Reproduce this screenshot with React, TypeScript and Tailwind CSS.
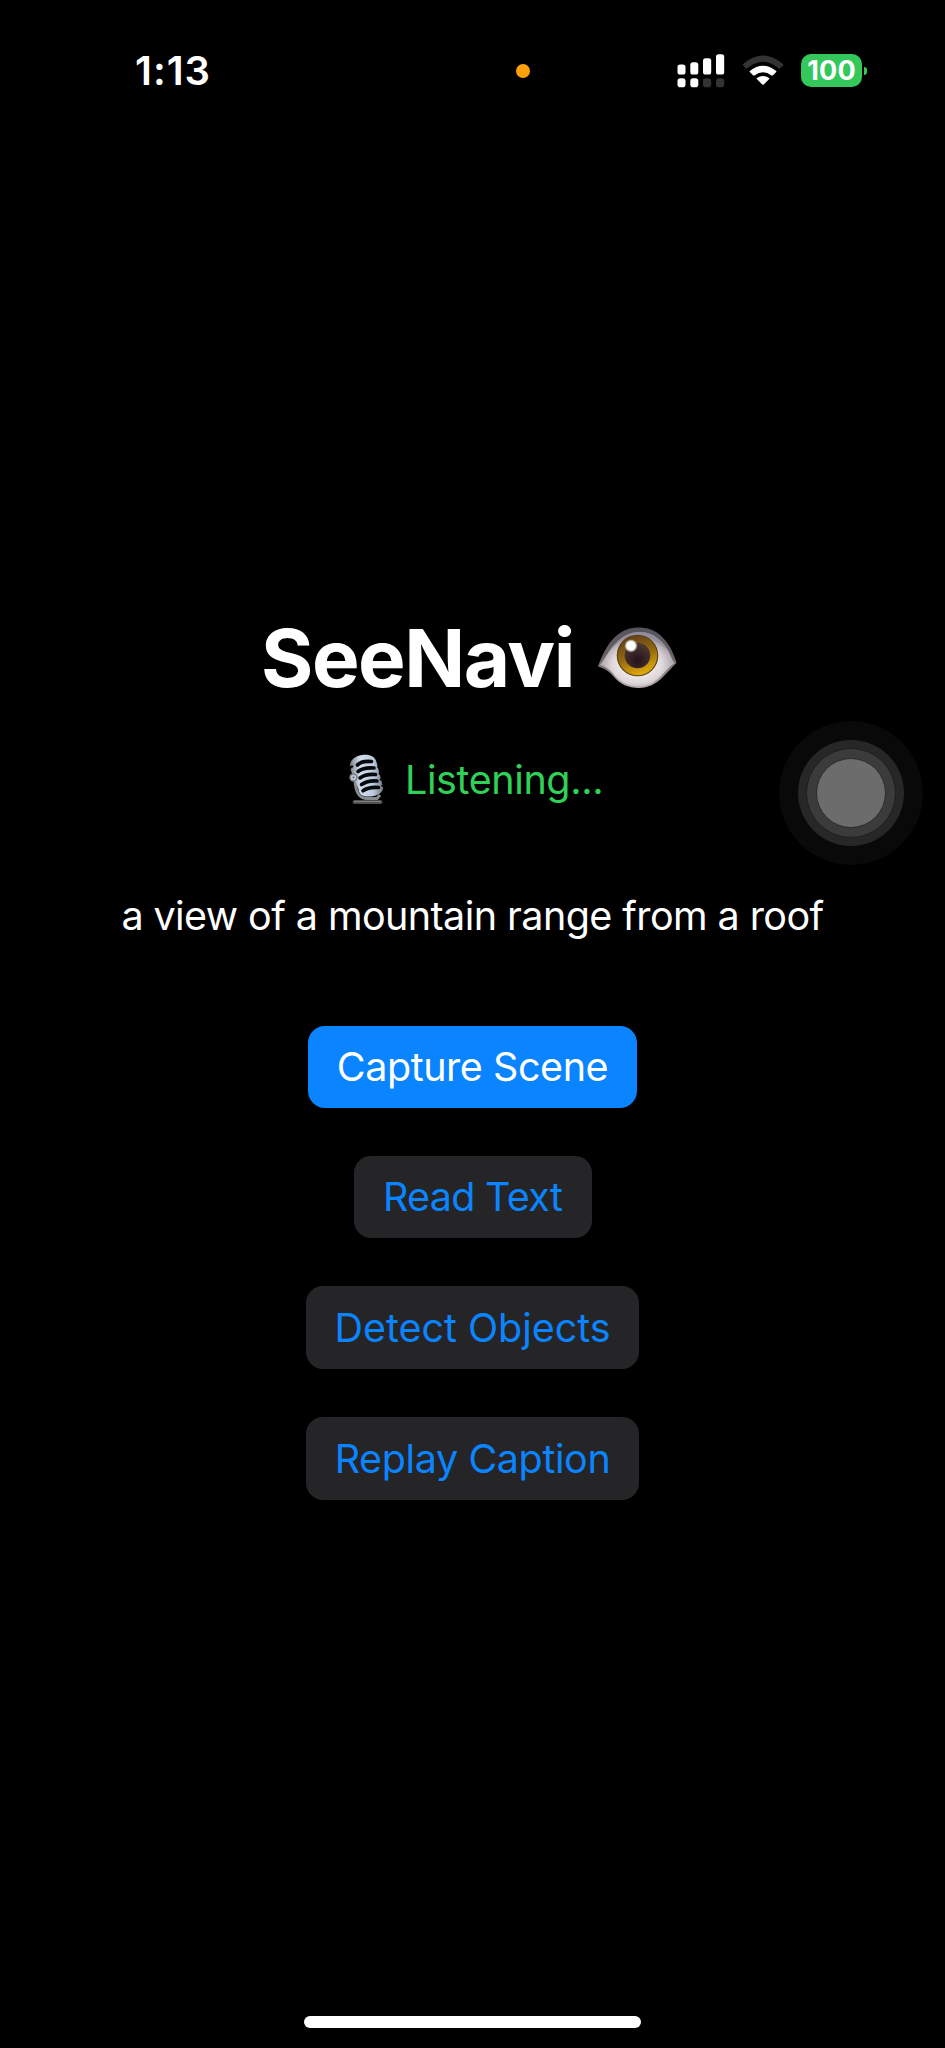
function SignalIcon() {
  return (
    <svg className="block h-[34px] w-[48px]" viewBox="0 0 48 34">
      <g fill="#fff">
        <rect x="0.5" y="10.5" width="8" height="10" rx="2.6" />
        <rect x="13.3" y="8.2" width="8" height="12.3" rx="2.6" />
        <rect x="26" y="4.2" width="8.2" height="16.3" rx="2.6" />
        <rect x="39" y="0.2" width="8.2" height="20.3" rx="2.6" />
        <rect x="0.5" y="24.2" width="8" height="9" rx="2.8" />
        <rect x="13.3" y="24.2" width="8" height="9" rx="2.8" />
      </g>
      <g fill="#333335">
        <rect x="26" y="24.2" width="8.2" height="9" rx="2.8" />
        <rect x="39" y="24.2" width="8.2" height="9" rx="2.8" />
      </g>
    </svg>
  );
}

function WifiIcon() {
  return (
    <svg className="block h-[34px] w-[42px]" viewBox="0 0 42 34">
      <path
        d="M0.8 10.2 Q21 -7.2 41.2 10.2 Q41.6 10.7 41.2 11.2 L37.9 14.4 Q37.4 14.8 36.9 14.4 Q21 1.2 5.1 14.4 Q4.6 14.8 4.1 14.4 L0.8 11.2 Q0.4 10.7 0.8 10.2Z"
        fill="#333335"
      />
      <path
        d="M7.8 17 Q21 6.6 34.2 17 Q34.7 17.6 34.2 18.1 L30.7 21.4 Q30.1 21.8 29.5 21.4 Q21 14.9 12.5 21.4 Q11.9 21.8 11.3 21.4 L7.8 18.1 Q7.3 17.6 7.8 17Z"
        fill="#fff"
      />
      <path
        d="M14.9 24 Q21 19.9 27.1 24 Q27.7 24.6 27.2 25.1 L21.7 30.5 Q21 31.2 20.3 30.5 L14.8 25.1 Q14.3 24.6 14.9 24Z"
        fill="#fff"
      />
    </svg>
  );
}

function Battery() {
  return (
    <div className="flex items-center gap-[2px]">
      <div className="flex h-[33px] w-[61px] items-center justify-center rounded-[10px] bg-[#34c759] text-[27px] leading-none font-bold tracking-[0.2px]">
        100
      </div>
      <div className="h-[8px] w-[3px] rounded-r-full bg-[#34c759]" />
    </div>
  );
}

function EyeIcon() {
  return (
    <svg className="block h-[62px] w-[80px]" viewBox="0 0 80 62">
      <defs>
        <linearGradient id="lid" x1="0" y1="0" x2="0" y2="1">
          <stop offset="0" stopColor="#55535a" />
          <stop offset="0.55" stopColor="#6f6468" />
          <stop offset="1" stopColor="#b5a8ac" />
        </linearGradient>
        <radialGradient id="sclera" cx="0.5" cy="0.6" r="0.55">
          <stop offset="0" stopColor="#fff" />
          <stop offset="0.6" stopColor="#e0d9dc" />
          <stop offset="1" stopColor="#978f9a" />
        </radialGradient>
        <linearGradient id="iris" x1="0.3" y1="0" x2="0.65" y2="1">
          <stop offset="0" stopColor="#5f4019" />
          <stop offset="0.5" stopColor="#94690f" />
          <stop offset="1" stopColor="#e5b00c" />
        </linearGradient>
        <radialGradient id="pupil" cx="0.5" cy="0.7" r="0.7">
          <stop offset="0" stopColor="#24121a" />
          <stop offset="1" stopColor="#513a35" />
        </radialGradient>
        <radialGradient id="glint">
          <stop offset="0.65" stopColor="#fff" />
          <stop offset="1" stopColor="#fff" stopOpacity="0.2" />
        </radialGradient>
      </defs>
      <path
        d="M1 39.5 C4 31 10 17 18 10 C27 1.5 37 0 46 0.8 C60 2 69 12 75 24 C77 29 79 33 79.5 36 C75 40 71 45 66 50 C59 57 51 61 42 61 C31 61 23 57 17 50 C12 44 7 41 1 39.5Z"
        fill="url(#lid)"
      />
      <path
        d="M2.5 38 C7 34 12 22 21 14 C29 6.5 37 4.5 45 5 C57 6 66 14 72 25 C74 30 76 34 78 36 C73 39 69 44 64 49 C57 56 51 59.5 42 59.5 C32 59.5 24 56 18 49 C13 42 8 39.5 2.5 38Z"
        fill="url(#sclera)"
      />
      <path d="M12 25 C25 5 37 5 45 5 C56 6 63 12 71 24 C59 12 49 9.5 40 9.5 C30 9.5 21 14 12 25Z" fill="#8d8c9c" opacity="0.75" />
      <circle cx="40.5" cy="28.5" r="20.8" fill="#5e4013" />
      <circle cx="40.5" cy="28.5" r="19.7" fill="url(#iris)" />
      <circle cx="40.5" cy="28.5" r="12.8" fill="url(#pupil)" />
      <circle cx="34" cy="18.8" r="6.4" fill="url(#glint)" />
    </svg>
  );
}

function MicIcon() {
  return (
    <svg className="block h-[52px] w-[36px]" viewBox="0 0 36 52">
      <defs>
        <linearGradient id="metal" x1="0" y1="0" x2="1" y2="0">
          <stop offset="0" stopColor="#77818a" />
          <stop offset="0.3" stopColor="#d3dfea" />
          <stop offset="0.7" stopColor="#bccade" />
          <stop offset="1" stopColor="#737a84" />
        </linearGradient>
      </defs>
      <rect x="3.5" y="46.3" width="30" height="3.6" rx="1.8" fill="#505050" />
      <path d="M5 47.3 H32" stroke="#8e8e8e" strokeWidth="1" />
      <path d="M6 27 C7 37 9 43 17 44.5 H28 L31 41" fill="none" stroke="#868b90" strokeWidth="3" />
      <path
        d="M1 12 C1 6 6 2 13 1 C20 0 26 2 27.5 8 L34 33 C34.5 38 29 42 21 42.5 C14 43 10.5 41 9.5 35 L2 17Z"
        fill="url(#metal)"
      />
      <g fill="none" stroke="#05090d" strokeWidth="3.6" strokeLinecap="round">
        <path d="M8.5 11 C11 8 17 7 22.5 7.5" />
        <path d="M9 17.5 C13 14.5 19 13.5 25 14" />
        <path d="M11 24 C15 21 21 20 26.5 20.5" />
        <path d="M12.5 30.5 C17 27.5 23 26.5 28 27" />
        <path d="M14 36.8 C18 34 24 33 29.5 33.5" />
      </g>
      <g stroke="#05090d" strokeWidth="2.6" strokeLinecap="round">
        <path d="M1.5 13.5 L3 12.5" />
        <path d="M29.5 13 L30 12.9" />
        <path d="M30.8 19.3 L31.5 19" />
        <path d="M32 25.5 L33 25.3" />
        <path d="M33.5 31.8 L34.5 31.6" />
      </g>
      <circle cx="4.5" cy="23.5" r="4.2" fill="#77818a" />
      <circle cx="4.5" cy="23.5" r="2.7" fill="#c1c9cf" />
      <circle cx="4.5" cy="23.5" r="1.1" fill="#68737a" />
    </svg>
  );
}

function StatusBar() {
  return (
    <header className="flex h-[141px] items-center">
      <div className="ml-[135px] w-[381px] text-[40px] leading-none font-semibold tracking-[1px]">1:13</div>
      <div className="size-[14px] rounded-full bg-[#ff9f0a]" />
      <div className="ml-[147px] flex items-center">
        <SignalIcon />
        <div className="ml-[17px]">
          <WifiIcon />
        </div>
        <div className="ml-[17px]">
          <Battery />
        </div>
      </div>
    </header>
  );
}

function AssistiveTouch() {
  return (
    <div className="absolute top-[721px] left-[779px] flex size-[144px] items-center justify-center rounded-full bg-[#090909]">
      <div className="flex size-[106px] items-center justify-center rounded-full bg-[#272727]">
        <div className="flex size-[90px] items-center justify-center rounded-full border border-[#1f1f1f] bg-[#3b3b3b]">
          <div className="size-[70px] rounded-full border border-[#2c2c2c] bg-[#6c6c6c]" />
        </div>
      </div>
    </div>
  );
}

export default function App() {
  const button = "flex items-center justify-center rounded-[17px] pt-[2px] text-[39.5px] leading-none whitespace-nowrap";
  return (
    <div className="relative flex h-[2048px] w-[945px] flex-col overflow-hidden bg-black font-['Inter',sans-serif] text-white">
      <StatusBar />
      <main className="flex flex-1 flex-col">
        <div className="mt-[476px] flex h-[82px] items-center pl-[261px]">
          <h1 className="w-[336px] text-[80px] leading-none font-bold tracking-[-1.5px] whitespace-nowrap">SeeNavi</h1>
          <EyeIcon />
        </div>
        <div className="mt-[50px] flex h-[61px] items-center pl-[349px]">
          <MicIcon />
          <p className="ml-[20px] pt-[2px] text-[39.5px] leading-none tracking-[-0.4px] whitespace-nowrap text-[#30d158]">Listening...</p>
        </div>
        <p className="mt-[81px] h-[50px] text-center text-[39.5px] leading-[50px] tracking-[-0.58px] whitespace-nowrap">
          a view of a mountain range from a roof
        </p>
        <div className="mt-[85px] flex flex-col items-center gap-[48px]">
          <button className={`${button} h-[82px] w-[329px] bg-[#0a84ff] tracking-[-0.45px]`}>Capture Scene</button>
          <button className={`${button} h-[82px] w-[238px] bg-[#252527] tracking-[-0.7px] text-[#0a84ff]`}>Read Text</button>
          <button className={`${button} h-[83px] w-[333px] bg-[#252527] tracking-[-0.05px] text-[#0a84ff]`}>Detect Objects</button>
          <button className={`${button} h-[83px] w-[333px] bg-[#252527] tracking-[-0.4px] text-[#0a84ff]`}>Replay Caption</button>
        </div>
      </main>
      <footer className="flex h-[32px] justify-center">
        <div className="h-[12px] w-[337px] rounded-full bg-white" />
      </footer>
      <AssistiveTouch />
    </div>
  );
}
